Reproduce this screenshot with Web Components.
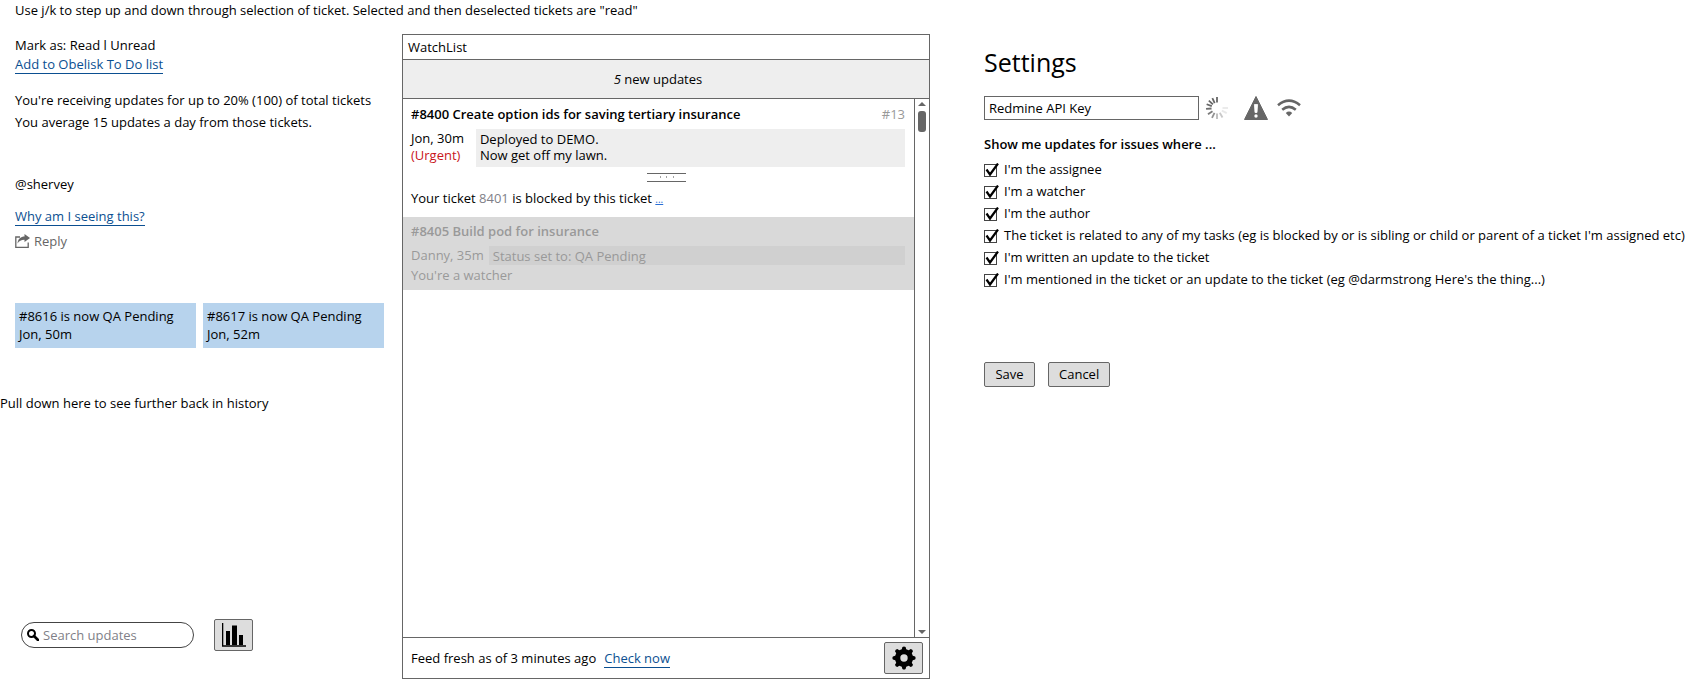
<!DOCTYPE html>
<html lang="en">
<head>
<meta charset="utf-8">
<title>WatchList</title>
<style>
html, body { margin: 0; }
body {
  font: 13px/18px "Open Sans", "Noto Sans", sans-serif;
  color: #000;
  background: #fff;
  --line: #666;
  --muted: #7f7f88;
  --link: #0b4f91;
  --face: #ddd;
}
</style>
</head>
<body>
<watch-app></watch-app>

<script>
const define = (name, html, setup) => {
  const template = document.createElement('template');
  template.innerHTML = `<style>*{box-sizing:border-box}p,h1,h2,h3,ul{margin:0;padding:0}</style>${html}`;
  customElements.define(name, class extends HTMLElement {
    constructor() {
      super();
      this.attachShadow({ mode: 'open' }).append(template.content.cloneNode(true));
    }
    connectedCallback() { if (setup) setup(this, this.shadowRoot); }
  });
};

const ICONS = {
  share: [15, 14, '<path d="M5 3H.8v10.300h12.400V8.500" fill="none" stroke="#666" stroke-width="1.300"/><path d="M2.500 9.500C3 4.500 6 2.500 9.500 2.500V0L15 4 9.500 8V5.800C6 5.800 4.200 7 2.500 9.500Z" fill="#666"/>'],
  search: [12, 12, '<circle cx="4.500" cy="4.500" r="3.500" fill="none" stroke="#000" stroke-width="2"/><path d="M7 7l4 4" stroke="#000" stroke-width="2.600" stroke-linecap="round"/>'],
  chart: [24, 24, '<path d="M.5 0V23.500M0 23H24" stroke="#000" stroke-width="1.600" fill="none"/><path d="M4 8h4v14H4zM10 2.500h5V22h-5zM17 12h4v10h-4z"/>'],
  gear: [24, 24, '<path fill-rule="evenodd" d="M9.800 3.200 10.400.9Q12-.1 13.600.9L14.200 3.200 16.700 4.200 18.700 3Q20.700 3.300 21 5.300L19.800 7.300 20.800 9.800 23.100 10.400Q24.100 12 23.100 13.600L20.800 14.200 19.800 16.700 21 18.700Q20.700 20.700 18.700 21L16.700 19.800 14.200 20.800 13.600 23.100Q12 24.100 10.400 23.100L9.800 20.800 7.300 19.800 5.300 21Q3.300 20.700 3 18.700L4.200 16.700 3.200 14.200.9 13.600Q-.1 12 .9 10.400L3.200 9.800 4.200 7.300 3 5.300Q3.300 3.300 5.300 3L7.300 4.200ZM12 8.300a3.700 3.700 0 1 0 0 7.400a3.700 3.700 0 1 0 0-7.400Z"/>'],
  warning: [24, 24, '<path d="M12 .5 23.500 23.500H.5Z" fill="#666" stroke="#666" stroke-linejoin="round"/><path d="M10.400 8.500h3.200L13 16.500h-2Z" fill="#fff" stroke="#fff" stroke-width=".8" stroke-linejoin="round"/><circle cx="12" cy="20" r="1.700" fill="#fff"/>'],
  wifi: [24, 18, '<g fill="none" stroke="#666" stroke-width="2.600"><path d="M1 6.200Q12-2.800 23 6.200"/><path d="M5.200 10.800Q12 5 18.800 10.800"/></g><path d="M8.800 14Q12 11.200 15.200 14L12 17.500Z" fill="#666"/>'],
  spinner: [24, 24, [[0, 1], [90, .14], [118, .14], [150, .35], [180, .45], [207, .7], [235, .85], [265, .95], [290, 1], [312, 1], [335, 1]].map(([a, o]) =>
    `<path d="M12 1V6.500" stroke="#666" stroke-width="1.800" opacity="${o}" transform="rotate(${a} 12 12)"/>`).join('')],
  tick: [15, 14, '<path d="M2.500 6.500 6 11.500 14 .5" fill="none" stroke="#000" stroke-width="2.200"/>'],
  up: [8, 4, '<path d="M0 4 4 0 8 4Z" fill="#666"/>'],
  down: [8, 4, '<path d="M0 0H8L4 4Z" fill="#666"/>']
};

define('ui-icon', '', (host, root) => {
  const [w, h, art] = ICONS[host.getAttribute('name')];
  root.innerHTML = `<style>:host{display:inline-flex;flex:none}svg{display:block}</style>
    <svg width="${w}" height="${h}" viewBox="0 0 ${w} ${h}" aria-hidden="true">${art}</svg>`;
});

define('ui-link', `<style>
  :host { display: inline-block; }
  a { display: block; line-height: 17px; color: var(--link); text-decoration: none; border-bottom: 1px solid var(--link); }
</style><a href="#"><slot></slot></a>`);

define('ui-button', `<style>
  :host { display: inline-block; }
  button { display: grid; place-items: center; min-width: 51px; height: 25px; padding: 0 10px 2px; font: inherit; color: inherit;
    background: var(--face); border: 1px solid var(--line); border-radius: 2px; }
  :host([square]) button { min-width: 0; width: 39px; height: 32px; padding: 0; }
</style><button type="button"><slot></slot></button>`, (host, root) => {
  if (host.title) root.querySelector('button').setAttribute('aria-label', host.title);
});

define('ui-check', `<style>
  :host { display: block; }
  label { display: grid; grid-template-columns: 15px minmax(0, 1fr); column-gap: 5px; }
  input, ui-icon { grid-area: 1 / 1; align-self: start; }
  input { appearance: none; width: 13px; height: 13px; margin: 4px 0 0; border: 1px solid #444; background: #fff; }
  ui-icon { margin-top: 3px; pointer-events: none; visibility: hidden; }
  input:checked + ui-icon { visibility: visible; }
  span { grid-column: 2; }
</style><label><input type="checkbox" checked><ui-icon name="tick"></ui-icon><span><slot></slot></span></label>`);

define('update-card', `<style>
  :host { display: block; flex: 1; min-width: 0; padding: 4px 4px 5px; background: #b7d3ed; }
</style><slot></slot>`);

define('ticket-item', `<style>
  :host { display: block; padding: 6px 9px 6px 8px; }
  :host([read]) { padding-top: 5px; background: #d9d9d9; color: #999; }
  header { display: flex; justify-content: space-between; gap: 8px; margin-bottom: 6px; }
  h3 { font-size: 13px; font-weight: 600; }
  .number { color: #999; }
  .entry { display: flex; align-items: stretch; gap: 12px; line-height: 16px; }
  .who { padding-top: 1px; line-height: 17px; }
  .body { flex: 1; padding: 2px 4px 4px; background: #eee; }
  :host([read]) .entry { gap: 5px; }
  :host([read]) .body { background: #d0d0d0; padding: 2px 4px 1px; }
</style>
<header><h3><slot name="title"></slot></h3><span class="number"><slot name="number"></slot></span></header>
<div class="entry"><div class="who"><slot name="who"></slot></div><div class="body"><slot name="body"></slot></div></div>
<slot></slot>`);

define('scroll-rail', `<style>
  :host { display: flex; flex-direction: column; align-items: center; width: 15px; padding: 3px 0; border-left: 1px solid var(--line); }
  .thumb { width: 8px; height: 21px; margin-top: 5px; border-radius: 3px; background: #666; }
  .last { margin-top: auto; }
</style><ui-icon name="up"></ui-icon><div class="thumb"></div><ui-icon name="down" class="last"></ui-icon>`);

define('side-notes', `<style>
  :host { display: flex; flex-direction: column; padding: 2px 18px 28px 15px; }
  .mark { margin-bottom: 1px; }
  .stats { margin-top: 17px; display: grid; gap: 4px; }
  .mention { margin-top: 44px; }
  .why { margin-top: 14px; }
  .reply { display: flex; align-items: center; gap: 4px; margin-top: 6px; padding: 0; border: 0; background: none; font: inherit; color: #666; align-self: start; }
  .cards { display: flex; gap: 7px; margin-top: 53px; }
  .pull { margin: 46px 0 0 -15px; }
  .tools { display: flex; align-items: center; gap: 20px; margin: auto 0 0 6px; }
  .search { display: flex; align-items: center; gap: 4px; width: 173px; height: 26px; padding: 0 5px; border: 1px solid #444; border-radius: 13px; }
  .search input { flex: 1; min-width: 0; padding: 0; border: 0; outline: 0; background: none; font: inherit; }
  .search input::placeholder { color: var(--muted); opacity: 1; }
</style>
<p class="mark">Mark as: Read l Unread</p>
<div class="link"><ui-link>Add to Obelisk To Do list</ui-link></div>
<div class="stats"><p>You're receiving updates for up to 20% (100) of total tickets</p><p>You average 15 updates a day from those tickets.</p></div>
<p class="mention">@shervey</p>
<div class="why"><ui-link>Why am I seeing this?</ui-link></div>
<button class="reply" type="button"><ui-icon name="share"></ui-icon>Reply</button>
<div class="cards">
  <update-card>#8616 is now QA Pending<br>Jon, 50m</update-card>
  <update-card>#8617 is now QA Pending<br>Jon, 52m</update-card>
</div>
<p class="pull">Pull down here to see further back in history</p>
<div class="tools">
  <label class="search"><ui-icon name="search"></ui-icon><input type="search" placeholder="Search updates" aria-label="Search updates"></label>
  <ui-button square title="Statistics"><ui-icon name="chart"></ui-icon></ui-button>
</div>`);

define('watch-list', `<style>
  :host { display: flex; flex-direction: column; border: 1px solid var(--line); }
  h2 { padding: 3px 5px; font-size: 13px; font-weight: 400; border-bottom: 1px solid var(--line); }
  .new { padding: 10px 24px 10px 8px; text-align: center; background: #eee; border-bottom: 1px solid var(--line); }
  .feed { flex: 1; display: flex; }
  .items { flex: 1; min-width: 0; }
  .urgent { color: #c9151b; }
  .grip { width: 39px; height: 9px; margin: 6px 0 7px calc(50% - 11px); border: solid var(--line); border-width: 1px 0; }
  .grip svg { display: block; margin: 0 auto; }
  .reason { padding-bottom: 3px; }
  .id { color: var(--muted); }
  .more { color: #2a6fd6; font-size: 10px; }
  .watching { margin-top: 1px; }
  footer { display: flex; align-items: center; gap: 8px; padding: 4px 6px 4px 8px; border-top: 1px solid var(--line); }
  footer ui-link { margin-top: 2px; }
  footer ui-button { margin-left: auto; }
</style>
<h2>WatchList</h2>
<p class="new"><i>5</i> new updates</p>
<div class="feed">
  <div class="items">
    <ticket-item>
      <span slot="title">#8400 Create option ids for saving tertiary insurance</span>
      <span slot="number">#13</span>
      <span slot="who">Jon, 30m<br><span class="urgent">(Urgent)</span></span>
      <span slot="body">Deployed to DEMO.<br>Now get off my lawn.</span>
      <div class="grip"><svg width="16" height="7"><path d="M1 3h1M7 3h1M14 3h1" stroke="#444" stroke-width="1"/></svg></div>
      <p class="reason">Your ticket <span class="id">8401</span> is blocked by this ticket <a class="more" href="#">...</a></p>
    </ticket-item>
    <ticket-item read>
      <span slot="title">#8405 Build pod for insurance</span>
      <span slot="who">Danny, 35m</span>
      <span slot="body">Status set to: QA Pending</span>
      <p class="watching">You're a watcher</p>
    </ticket-item>
  </div>
  <scroll-rail></scroll-rail>
</div>
<footer><span>Feed fresh as of 3 minutes ago</span><ui-link>Check now</ui-link><ui-button square title="Settings"><ui-icon name="gear"></ui-icon></ui-button></footer>`);

define('settings-form', `<style>
  :host { display: block; padding: 11px 0 0 54px; }
  h1 { font-size: 25px; line-height: 34px; font-weight: 400; }
  .key { display: flex; align-items: center; margin-top: 17px; }
  .key input { width: 215px; height: 24px; padding: 0 4px; border: 1px solid var(--line); font: inherit; color: inherit; }
  .spin { margin-left: 6px; }
  .warn { margin-left: 15px; }
  .wifi { margin-left: 9px; }
  h2 { margin-top: 15px; font-size: 13px; font-weight: 600; }
  .checks { display: grid; gap: 4px; margin-top: 7px; }
  .actions { display: flex; gap: 13px; margin-top: 74px; }
</style>
<form>
  <h1>Settings</h1>
  <div class="key">
    <input type="text" value="Redmine API Key" aria-label="Redmine API Key">
    <ui-icon class="spin" name="spinner"></ui-icon><ui-icon class="warn" name="warning"></ui-icon><ui-icon class="wifi" name="wifi"></ui-icon>
  </div>
  <h2>Show me updates for issues where ...</h2>
  <div class="checks">
    <ui-check>I'm the assignee</ui-check>
    <ui-check>I'm a watcher</ui-check>
    <ui-check>I'm the author</ui-check>
    <ui-check>The ticket is related to any of my tasks (eg is blocked by or is sibling or child or parent of a ticket I'm assigned etc)</ui-check>
    <ui-check>I'm written an update to the ticket</ui-check>
    <ui-check>I'm mentioned in the ticket or an update to the ticket (eg @darmstrong Here's the thing...)</ui-check>
  </div>
  <div class="actions"><ui-button>Save</ui-button><ui-button>Cancel</ui-button></div>
</form>`);

define('watch-app', `<style>
  :host { display: flex; flex-direction: column; min-height: 100vh; }
  .hint { padding: 1px 15px 15px; }
  main { flex: 1; display: grid; grid-template-columns: minmax(0, 402fr) minmax(0, 528fr) minmax(0, 755fr); }
</style>
<p class="hint">Use j/k to step up and down through selection of ticket. Selected and then deselected tickets are "read"</p>
<main><side-notes></side-notes><watch-list></watch-list><settings-form></settings-form></main>`);
</script>
</body>
</html>
